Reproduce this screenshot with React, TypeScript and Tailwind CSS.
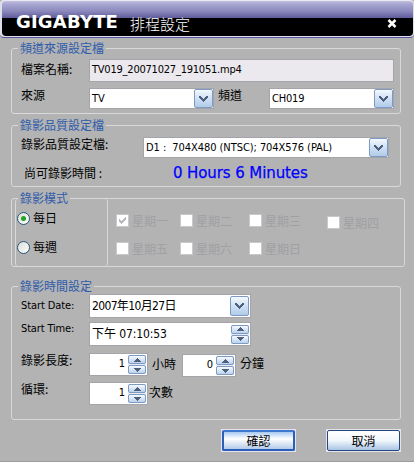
import React, { useState } from "react";

type Kids = { children?: React.ReactNode; className?: string };

const cjk = "font-['Noto_Sans_CJK_TC',sans-serif]";
const latin = "font-['DejaVu_Sans_Condensed','DejaVu_Sans','Noto_Sans_CJK_TC',sans-serif]";

function Group({ title, children, className = "" }: Kids & { title: string }) {
  return (
    <fieldset className={`rounded-[3px] border border-[#d9d9db] ${className}`}>
      <legend className={`ml-[6px] h-[15px] px-[2px] text-[12px] leading-[14px] whitespace-nowrap text-[#2f5cab] ${cjk}`}>
        {title}
      </legend>
      {children}
    </fieldset>
  );
}

function Label({ children, className = "" }: Kids) {
  return (
    <span className={`block h-[14px] shrink-0 text-[12px] leading-[14px] whitespace-nowrap text-black ${cjk} ${className}`}>
      {children}
    </span>
  );
}

function Field({ children, className = "" }: Kids) {
  return (
    <div className={`flex shrink-0 items-center border border-[#a5a4aa] pl-[2px] text-[11px] whitespace-nowrap text-black ${latin} ${className}`}>
      {children}
    </div>
  );
}

function DropButton({ className = "" }: Kids) {
  return (
    <button
      aria-label="open"
      className={`ml-auto flex w-[19px] shrink-0 items-center justify-center rounded-[2px] border border-[#7b9bc4] bg-linear-to-b from-[#f4f9fe] via-[#cfe0f4] to-[#b2cbe9] ${className}`}
    >
      <svg width="9" height="6" viewBox="0 0 9 6" shapeRendering="crispEdges">
        <path d="M0 0h2v1h1v1h1v1h1v-1h1v-1h1v-1h2v2h-1v1h-1v1h-1v1h-1v1h-1v-1h-1v-1h-1v-1h-1v-1h-1z" fill="#4d5f7d" />
      </svg>
    </button>
  );
}

function SpinButtons() {
  const half =
    "flex h-[9px] w-[18px] items-center justify-center rounded-[2px] border border-[#7b9bc4] bg-linear-to-b from-[#f6faff] to-[#bcd2ec]";
  return (
    <div className="mr-px ml-auto flex shrink-0 flex-col gap-px bg-[#ece9ef]">
      <button aria-label="up" className={half}>
        <svg width="7" height="4" viewBox="0 0 7 4" shapeRendering="crispEdges">
          <path d="M3 0h1v1h1v1h1v1h1v1h-7v-1h1v-1h1v-1h1z" fill="#4d5f7d" />
        </svg>
      </button>
      <button aria-label="down" className={half}>
        <svg width="7" height="4" viewBox="0 0 7 4" shapeRendering="crispEdges">
          <path d="M0 0h7v1h-1v1h-1v1h-1v1h-1v-1h-1v-1h-1v-1h-1z" fill="#4d5f7d" />
        </svg>
      </button>
    </div>
  );
}

function Radio({ text, on, pick }: { text: string; on: boolean; pick: () => void }) {
  return (
    <button onClick={pick} className="flex h-[14px] items-center">
      <span className="flex size-[13px] items-center justify-center rounded-full border border-[#28577f] bg-linear-to-br from-[#dcdcd8] to-white">
        {on && <span className="size-[5px] rounded-full bg-[#23a423]" />}
      </span>
      <Label className="ml-[3px]">{text}</Label>
    </button>
  );
}

function Day({ text, checked = false, className = "" }: { text: string; checked?: boolean; className?: string }) {
  return (
    <div className={`flex h-[13px] shrink-0 items-center ${className}`}>
      <span className="flex size-[13px] items-center justify-center border border-[#c9c8cc] bg-white">
        {checked && (
          <svg width="7" height="7" viewBox="0 0 7 7" shapeRendering="crispEdges">
            <path d="M0 2h1v1h1v1h1v-1h1v-1h1v-1h1v-1h1v3h-1v1h-1v1h-1v1h-1v1h-1v-1h-1v-1h-1z" fill="#b9b8bc" />
          </svg>
        )}
      </span>
      <span className={`ml-[3px] text-[12px] leading-[13px] text-[#a0a0a4] ${cjk}`}>{text}</span>
    </div>
  );
}

export default function App() {
  const [mode, setMode] = useState("daily");
  return (
    <div className="flex h-[462px] w-[414px] flex-col overflow-hidden border-b border-[#9c9ca0] bg-[#b3b3b3]">
      <header className="h-[38px] shrink-0 bg-[#b3b3b3]">
        <div className="h-[38px] rounded-t-[4px] rounded-b-[4px] border-t border-b border-t-[#e8e8f4] border-b-[#56549a] bg-[#dedeea]">
          <div className="ml-[2px] flex h-[35px] w-[411px] items-start rounded-[4px] bg-[linear-gradient(to_bottom,#c2c0df_0px,#a9a7d2_3px,#8c89bd_10px,#5f5b9c_17px,#000_17px,#000_100%)]">
            <span className="mt-[10px] ml-[14px] w-[104px] text-[18px] leading-[21px] font-bold tracking-[0.2px] whitespace-nowrap text-white font-['DejaVu_Sans',sans-serif]">
              GIGABYTE
            </span>
            <h1 className={`mt-[12px] ml-[10px] text-[15px] leading-[21px] font-light whitespace-nowrap text-white ${cjk}`}>排程設定</h1>
            <button aria-label="close" className="mt-[18px] mr-[16px] ml-auto">
              <svg width="10" height="9" viewBox="0 0 10 9" className="block">
                <path d="M1.5 1 8.5 8M8.5 1 1.5 8" stroke="#fff" strokeWidth="2.5" />
              </svg>
            </button>
          </div>
        </div>
      </header>

      <Group title="頻道來源設定檔" className="mt-[3px] ml-[11px] h-[73px] w-[390px]">
        <div className="mt-[3px] flex h-[23px] pl-[9px]">
          <Label className="mt-[3px] w-[68px]">檔案名稱:</Label>
          <Field className="h-[23px] w-[305px] bg-[#ebe8ee] tracking-[-0.22px]">TV019_20071027_191051.mp4</Field>
        </div>
        <div className="mt-[6px] flex h-[21px] pl-[9px]">
          <Label className="w-[68px]">來源</Label>
          <Field className="h-[21px] w-[125px] bg-white">
            <span className="pt-px">TV</span>
            <DropButton className="h-[19px]" />
          </Field>
          <Label className="ml-[4px] w-[51px]">頻道</Label>
          <Field className="h-[21px] w-[125px] bg-white">
            <span className="pt-px tracking-[-0.2px]">CH019</span>
            <DropButton className="h-[19px]" />
          </Field>
        </div>
      </Group>

      <Group title="錄影品質設定檔" className="mt-[4px] ml-[11px] h-[69px] w-[390px]">
        <div className="mt-[4px] flex h-[21px] pl-[9px]">
          <Label className="w-[122px]">錄影品質設定檔:</Label>
          <Field className="h-[21px] w-[246px] bg-white">
            <span className="pt-px tracking-[-0.06px] whitespace-pre">D1 :  704X480 (NTSC); 704X576 (PAL)</span>
            <DropButton className="h-[19px]" />
          </Field>
        </div>
        <div className="mt-[5px] flex h-[20px] items-center pl-[12px]">
          <Label className="w-[149px]">尚可錄影時間 :</Label>
          <span className="text-[15px] leading-[20px] tracking-[-0.1px] whitespace-nowrap text-[#0000ff] [-webkit-text-stroke:0.25px_#0000ff] font-['DejaVu_Sans',sans-serif]">
            0 Hours 6 Minutes
          </span>
        </div>
      </Group>

      <Group title="錄影模式" className="mt-[4px] ml-[11px] h-[76px] w-[394px]">
        <div className="-mt-[7px] flex h-[67px] pl-[3px]">
          <div className="flex w-[93px] flex-col gap-[15px] rounded-[3px] border-x border-[#d9d9db] pt-[12px] pl-[1px]">
            <Radio text="每日" on={mode === "daily"} pick={() => setMode("daily")} />
            <Radio text="每週" on={mode === "weekly"} pick={() => setMode("weekly")} />
          </div>
          <div className="ml-[8px] grid grid-cols-[64px_69px_78px_60px] grid-rows-[28px_28px] pt-[15px]">
            <Day text="星期一" checked />
            <Day text="星期二" />
            <Day text="星期三" />
            <Day text="星期四" className="mt-[2px]" />
            <Day text="星期五" />
            <Day text="星期六" />
            <Day text="星期日" />
          </div>
        </div>
      </Group>

      <Group title="錄影時間設定" className="mt-[12px] ml-[11px] h-[141px] w-[390px]">
        <div className="flex h-[24px] pl-[9px]">
          <Label className="mt-[5px] w-[68px] text-[11px]! tracking-[-0.1px] font-['DejaVu_Sans_Condensed',sans-serif]!">Start Date:</Label>
          <Field className="h-[24px] w-[162px] bg-white text-[12px]!">
            <span className="pb-px tracking-[-0.65px]">2007年10月27日</span>
            <DropButton className="mr-px h-[20px]" />
          </Field>
        </div>
        <div className="mt-[4px] flex h-[24px] pl-[9px]">
          <Label className="w-[68px] text-[11px]! tracking-[-0.15px] font-['DejaVu_Sans_Condensed',sans-serif]!">Start Time:</Label>
          <Field className="h-[24px] w-[162px] bg-white text-[12px]!">
            <span className="tracking-[-0.1px]">下午 07:10:53</span>
            <SpinButtons />
          </Field>
        </div>
        <div className="mt-[7px] flex h-[23px] pl-[9px]">
          <Label className="w-[68px]">錄影長度:</Label>
          <Field className="h-[23px] w-[59px] bg-white">
            <span className="w-[33px] text-right">1</span>
            <SpinButtons />
          </Field>
          <Label className="mt-[4px] ml-[4px] w-[30px]">小時</Label>
          <Field className="mt-px h-[23px] w-[54px] bg-white">
            <span className="w-[28px] text-right">0</span>
            <SpinButtons />
          </Field>
          <Label className="mt-[3px] ml-[4px]">分鐘</Label>
        </div>
        <div className="mt-[6px] flex h-[23px] pl-[9px]">
          <Label className="w-[68px]">循環:</Label>
          <Field className="h-[23px] w-[59px] bg-white">
            <span className="w-[33px] text-right">1</span>
            <SpinButtons />
          </Field>
          <Label className="mt-[3px] ml-[1px]">次數</Label>
        </div>
      </Group>

      <footer className="mt-[9px] flex h-[23px] gap-[30px] pl-[221px]">
        <button className={`flex w-[75px] items-center justify-center border border-[#e4e4e8] bg-white text-[12px] text-black ${cjk}`}>
          <span className="flex h-full w-full items-center justify-center rounded-[2px] border-2 border-[#2b5dbb] border-t-[#3f78cf] bg-linear-to-b from-[#a9c8f0] via-white via-40% to-[#b4cbe8]">
            確認
          </span>
        </button>
        <button className={`flex w-[75px] items-center justify-center border border-[#e4e4e8] bg-white text-[12px] text-black ${cjk}`}>
          <span className="flex h-full w-full items-center justify-center rounded-[2px] border border-[#24477f] bg-linear-to-b from-white via-[#f2f7fc] via-50% to-[#a9c4e4]">
            取消
          </span>
        </button>
      </footer>
    </div>
  );
}
